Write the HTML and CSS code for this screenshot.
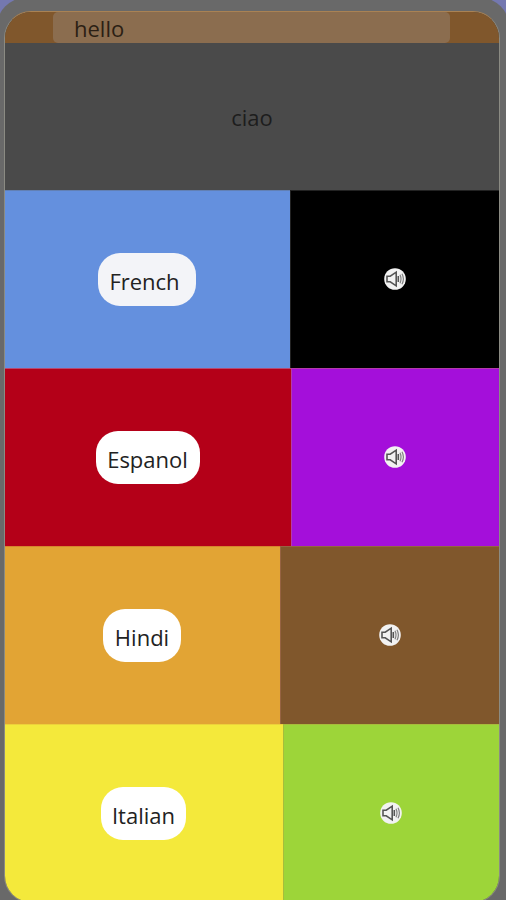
FILE: index.html
```html
<!DOCTYPE html>
<html lang="en">
<head>
<meta charset="utf-8">
<title>Translator</title>
<link rel="stylesheet" href="styles.css">
</head>
<body>
<svg class="defs" width="0" height="0" aria-hidden="true">
  <symbol id="speaker" viewBox="0 0 22 22">
    <circle cx="11" cy="11" r="10.8" fill="#f2f2f2"/>
    <g fill="none" stroke="#555">
      <path d="M3 8.2H6.2L12.2 4.2V17.8L6.2 13.8H3Z" stroke-width="1.6"/>
      <path d="M14.3 8V14" stroke-width="1.6"/>
      <path d="M16 6.8Q18 11 16 15.2M18 5.8Q20.8 11 18 16.2" stroke-width="1.2" stroke="#808080"/>
    </g>
  </symbol>
</svg>
<div class="frame">
  <main class="phone">
    <header class="search"><div class="field">hello</div></header>
    <section class="result"><span>ciao</span></section>
    <section class="row french">
      <div class="language"><button>French</button></div>
      <div class="sound"><svg><use href="#speaker"/></svg></div>
    </section>
    <section class="row espanol">
      <div class="language"><button>Espanol</button></div>
      <div class="sound"><svg><use href="#speaker"/></svg></div>
    </section>
    <section class="row hindi">
      <div class="language"><button>Hindi</button></div>
      <div class="sound"><svg><use href="#speaker"/></svg></div>
    </section>
    <section class="row italian">
      <div class="language"><button>Italian</button></div>
      <div class="sound"><svg><use href="#speaker"/></svg></div>
    </section>
  </main>
</div>
</body>
</html>
```
FILE: styles.css
```css
* { box-sizing: border-box; }
body {
  margin: 0;
  height: 900px;
  overflow: hidden;
  background: #7478b0;
  font: 22px/30px "Open Sans", "Noto Sans", sans-serif;
  color: #222;
}
.defs { display: block; height: 0; }
.frame {
  height: 930px;
  margin: 0 -4px;
  margin-top: -3px;
  padding: 14px 10px 0 8px;
  background: #696969;
  border-radius: 32px;
}
.phone {
  height: 892px;
  overflow: hidden;
  border: 1px solid;
  border-color: #a98254 #8b8b83 #8b8b83;
  border-radius: 27px;
  background: #4a4a4a;
}
.search {
  height: 31px;
  background: #80572c;
  padding-left: 48px;
}
.field {
  width: 397px;
  height: 31px;
  padding: 1px 0 0 21px;
  border-radius: 5px;
  background: #8b6d4f;
  color: #2b1f14;
}
.result {
  height: 147px;
  display: flex;
  align-items: center;
  justify-content: center;
  padding-top: 1px;
  color: #1d1d1d;
}
.row { display: flex; height: 178px; }
.language, .sound {
  display: flex;
  align-items: center;
  justify-content: center;
  padding: 0 1px 1px 0;
}
.language { border-top: 1px solid; }
.sound { flex: 1; border-top: 1px solid; border-left: 1px solid; padding-bottom: 2px; }
.sound svg { width: 22px; height: 22px; }
button {
  height: 53px;
  margin: 0;
  padding: 4px 0 0;
  border: 0;
  border-radius: 22px;
  background: #fff;
  color: #222;
  font: inherit;
}
.french .language { width: 285px; background: #6490de; border-color: #6280b4; }
.french .sound { background: #000; border-color: #222; }
.french button { width: 98px; padding-right: 5px; background: #f3f4f8; }
.espanol .language { width: 286px; background: #b40018; border-color: #b64b72; }
.espanol .sound { background: #a40fda; border-color: #b43ba9; }
.espanol button { width: 104px; }
.hindi .language { width: 275px; background: #e2a434; border-color: #d7842e; }
.hindi .sound { background: #80572c; border-color: #966342; }
.hindi button { width: 78px; }
.italian .language { width: 278px; background: #f4e93b; border-color: #edd13a; }
.italian .sound { background: #9dd539; border-color: #a7bd3b; }
.italian button { width: 85px; }
```
